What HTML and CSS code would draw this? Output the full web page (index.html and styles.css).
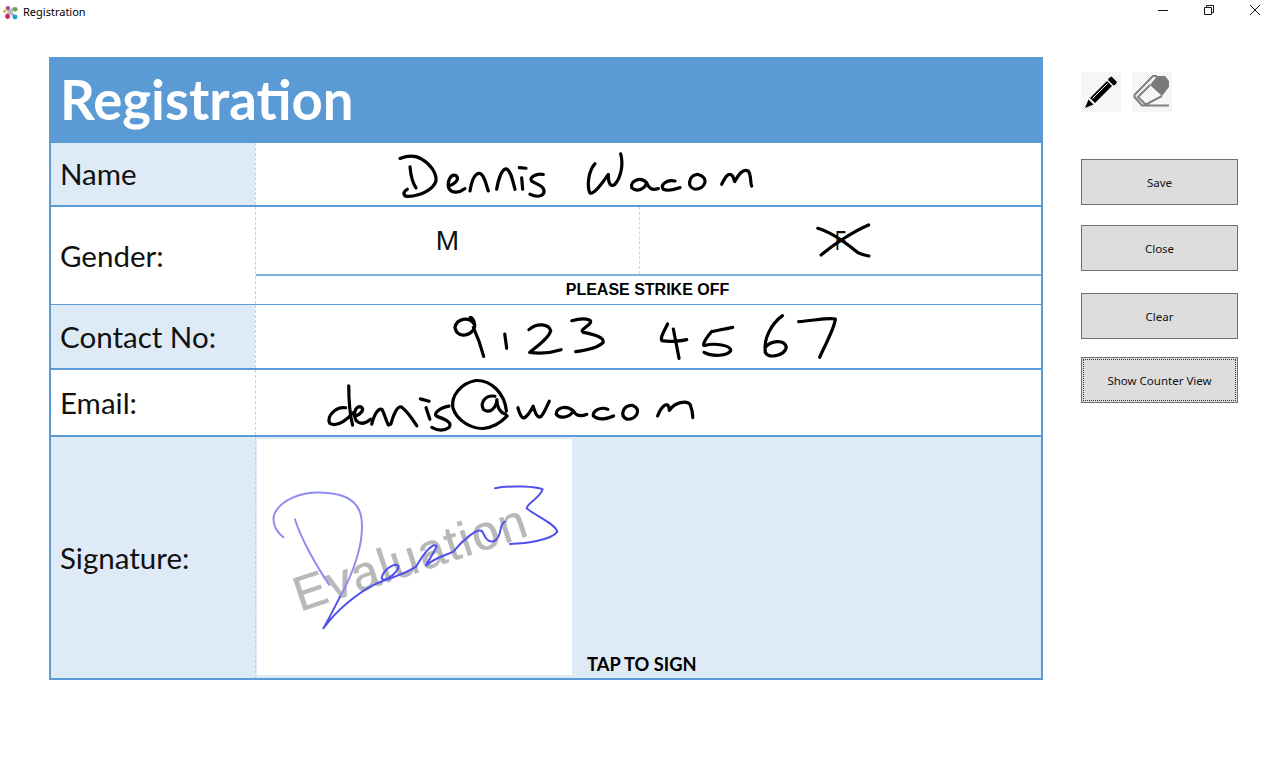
FILE: index.html
```html
<!DOCTYPE html>
<html lang="en">
<head>
<meta charset="utf-8">
<title>Registration</title>
<link rel="stylesheet" href="styles.css">
</head>
<body>
<div class="titlebar">
  <div class="title-left">
    <svg class="app-icon" viewBox="0 0 16 16" width="16" height="16">
      <path d="M8 8 L4 3 M8 8 L12 4 M8 8 L4 12 M8 8 L12 12" stroke="#b5b5b5" stroke-width="3"/>
      <circle cx="8" cy="8" r="2.5" fill="#b8b8b8"/>
      <circle cx="2.6" cy="7.2" r="1.7" fill="#e8b93a"/>
      <circle cx="6" cy="4" r="2.1" fill="#9c4f96"/>
      <circle cx="13.2" cy="5.3" r="2.4" fill="#6aa84f"/>
      <circle cx="5.6" cy="12.5" r="2.4" fill="#d81b72"/>
      <circle cx="13" cy="13" r="2.4" fill="#1ba1d8"/>
    </svg>
    <span class="title-text">Registration</span>
  </div>
  <div class="win-controls">
    <div class="win-btn"><svg viewBox="0 0 10 10" width="10" height="10"><path d="M0 5.5H10" stroke="#111" fill="none"/></svg></div>
    <div class="win-btn"><svg viewBox="0 0 10 10" width="10" height="10"><path d="M.5 2.5H7.5V9.5H.5ZM2.5 2.5V.5H9.5V7.5H7.5" stroke="#111" fill="none"/></svg></div>
    <div class="win-btn"><svg viewBox="0 0 10 10" width="10" height="10"><path d="M0 0L10 10M10 0L0 10" stroke="#111" fill="none"/></svg></div>
  </div>
</div>

<main class="main">
  <section class="form">
    <h1 class="form-title">Registration</h1>

    <div class="row row-name">
      <div class="label tinted">Name</div>
      <div class="value">
        <svg class="ink" viewBox="-372 9 2355 189" preserveAspectRatio="none">
          <path d="M60 56C80 48 105 45 125 58C150 72 170 100 168 125C160 152 120 170 85 172C70 172 66 160 82 150M90 82C92 105 97 130 108 146"/>
          <path d="M205 140C225 135 240 120 228 108C210 102 200 130 207 148C218 165 240 160 255 148"/>
          <path d="M270 155C275 125 285 100 300 102C312 105 318 135 325 155M350 150C355 120 365 90 378 88C392 90 398 125 405 150"/>
          <path d="M425 115L428 150M418 84L438 86"/>
          <path d="M490 105C470 100 445 115 455 125C470 135 495 140 492 160C485 175 465 172 450 165"/>
          <path d="M645 72C625 95 620 140 630 162C645 165 670 125 685 105C685 130 690 145 705 135C725 110 730 70 722 42"/>
          <path d="M800 130C780 110 750 125 755 145C770 160 795 150 800 130C805 145 815 155 835 148"/>
          <path d="M885 125C860 120 840 135 850 150C865 158 885 150 900 145"/>
          <path d="M950 105C925 110 920 145 945 150C975 150 990 115 955 105"/>
          <path d="M1025 135C1035 115 1045 95 1058 110C1065 125 1063 130 1065 125C1075 105 1090 85 1105 95C1115 110 1110 130 1115 140"/>
        </svg>
      </div>
    </div>

    <div class="row row-gender">
      <div class="label">Gender:</div>
      <div class="value gender-value">
        <div class="gender-options">
          <div class="gender-option">M</div>
          <div class="gender-option gender-f">
            <span class="gender-letter">F</span>
            <svg class="ink strike" viewBox="-417 21 1200 201" preserveAspectRatio="none">
              <path d="M115 85C150 95 200 130 225 150C240 165 255 165 268 168"/>
              <path d="M125 165C160 135 220 95 267 75"/>
            </svg>
          </div>
        </div>
        <div class="strike-note">PLEASE STRIKE OFF</div>
      </div>
    </div>

    <div class="row row-contact">
      <div class="label tinted">Contact No:</div>
      <div class="value">
        <svg class="ink" viewBox="15.7 18 2049 189" preserveAspectRatio="none">
          <path d="M585 75C570 50 540 60 535 85C540 115 570 115 585 90C590 70 580 55 575 55M583 85C595 115 605 150 610 172"/>
          <path d="M665 105L670 148"/>
          <path d="M728 92C750 70 780 75 785 95C780 120 745 145 730 160C760 165 790 160 812 152"/>
          <path d="M840 65C870 55 895 60 888 72C880 85 860 92 870 100C895 105 925 115 922 130C905 150 870 155 850 158"/>
          <path d="M1090 75C1080 100 1070 115 1075 125C1100 130 1130 125 1140 122M1105 90C1110 120 1115 150 1120 178"/>
          <path d="M1260 85C1235 90 1220 95 1205 98C1195 110 1180 135 1185 140C1215 130 1255 140 1255 155C1245 170 1210 175 1185 160"/>
          <path d="M1390 50C1360 75 1340 120 1345 160C1355 180 1395 170 1400 145C1395 120 1360 125 1345 145"/>
          <path d="M1432 68C1470 65 1510 55 1528 60C1525 90 1500 140 1487 175"/>
        </svg>
      </div>
    </div>

    <div class="row row-email">
      <div class="label">Email:</div>
      <div class="value">
        <svg class="ink" viewBox="15.7 210 2051 198" preserveAspectRatio="none">
          <path d="M258 258C258 300 262 350 268 378M250 325C225 320 200 350 208 372C225 385 250 365 270 340"/>
          <path d="M275 350C290 345 300 330 290 322C275 320 268 345 278 365C290 378 305 370 315 360"/>
          <path d="M318 375C325 345 335 325 345 330C352 345 355 365 362 378M368 375C375 345 385 320 395 322C410 335 425 360 436 380"/>
          <path d="M460 325L470 360M445 298L468 305"/>
          <path d="M520 320C495 325 475 345 490 352C510 360 530 370 520 385C505 398 490 395 475 385"/>
          <path d="M670 335C665 280 630 240 590 242C550 250 525 290 530 325C540 365 580 390 610 388C640 385 660 365 672 350"/>
          <path d="M640 290C615 285 600 310 610 330C625 345 645 325 645 300C645 325 655 340 668 345"/>
          <path d="M700 325C705 345 710 360 718 355C730 345 735 330 740 320C745 340 750 358 760 352C770 340 775 320 782 305"/>
          <path d="M845 335C825 315 800 325 800 345C810 360 835 355 845 335C850 345 860 355 880 345"/>
          <path d="M935 330C915 320 895 335 897 350C910 365 935 358 950 350"/>
          <path d="M995 318C975 320 965 350 985 360C1010 360 1025 330 1000 318"/>
          <path d="M1065 350C1075 320 1090 305 1095 325C1095 335 1095 335 1098 330C1110 310 1140 300 1150 315C1155 330 1157 345 1157 355"/>
        </svg>
      </div>
    </div>

    <div class="row row-signature">
      <div class="label tinted">Signature:</div>
      <div class="value sign-value">
        <div class="sign-box">
          <svg class="signature" viewBox="21 -93 945 708">
            <text class="watermark" transform="translate(150 425) rotate(-18.4)">Evaluation</text>
            <path class="sig-light" d="M100 202C80 185 65 165 72 135C90 90 150 65 220 68C290 70 330 95 335 150C342 220 310 310 270 380"/>
            <path class="sig-light" d="M135 148C150 200 200 290 238 345"/>
            <path class="sig-dark" d="M270 380C250 420 235 450 220 475C260 420 320 370 380 340C420 325 470 310 498 290"/>
            <path class="sig-dark" d="M395 322C405 290 450 272 445 295C430 320 395 340 395 322"/>
            <path class="sig-dark" d="M498 290C515 262 545 215 560 228C555 245 520 295 530 285C560 260 590 255 610 245C630 220 690 160 700 190C710 215 730 225 745 200C755 180 750 160 765 155"/>
            <path class="sig-dark" d="M735 55C780 45 860 50 878 58C870 85 830 100 830 115C860 140 915 160 922 185C905 210 830 220 780 222"/>
          </svg>
        </div>
        <div class="tap">TAP TO SIGN</div>
      </div>
    </div>
  </section>

  <aside class="side">
    <div class="tools">
      <div class="tool">
        <svg viewBox="0 0 40 40" width="40" height="40">
          <path d="M4 36L7.500 27.500L12.500 32.500Z" fill="#000"/>
          <path d="M9 26L26 9L31 14L14 31Z" fill="#000"/>
          <path d="M11.500 26.500L26.500 11.500" stroke="#fff" stroke-width="1" fill="none"/>
          <path d="M28 6L30.500 4.500L36 10L34.500 12.500L32.500 13.500L27 8Z" fill="#000"/>
        </svg>
      </div>
      <div class="tool">
        <svg viewBox="0 0 40 40" width="40" height="40">
          <path d="M25 4H33L37 9V15L30 24L18 13Z" fill="#7a7a7a"/>
          <path d="M25 4H21L2.500 23V25L10 33.500H37M18 13L6 25L13 32L15 32L30 24" fill="none" stroke="#808080" stroke-width="2"/>
        </svg>
      </div>
    </div>
    <button class="btn btn-save">Save</button>
    <button class="btn btn-close">Close</button>
    <button class="btn btn-clear">Clear</button>
    <button class="btn btn-counter"><span class="focus-ring">Show Counter View</span></button>
  </aside>
</main>
</body>
</html>
```
FILE: styles.css
```css
* { box-sizing: border-box; }
html, body { margin: 0; padding: 0; height: 100%; background: #fff; overflow: hidden; }
body { font-family: "Open Sans", "Liberation Sans", sans-serif; color: #000; }

.titlebar { height: 24px; display: flex; justify-content: space-between; align-items: flex-start; }
.title-left { display: flex; align-items: center; height: 24px; padding-left: 2px; gap: 5px; }
.app-icon { display: block; }
.title-text { font-family: "Noto Sans", sans-serif; font-size: 11px; line-height: 24px; }
.win-controls { display: flex; padding-right: 2px; }
.win-btn { width: 46px; height: 20px; display: flex; align-items: center; justify-content: center; }
.win-btn svg { display: block; }

.main { display: flex; padding: 33px 0 0 49px; }

.form {
  width: 994px; height: 623px; border: 2px solid #5b9bd5;
  display: grid; grid-template-rows: 84px 64px 98px 65px 67px 241px;
}
.form-title {
  margin: 0; background: #5b9bd5; color: #fff; padding-left: 9px;
  font-family: Lato, sans-serif; font-weight: 700; font-size: 54.5px; line-height: 81px;
}
.row { display: grid; grid-template-columns: 204px minmax(0, 1fr); grid-template-rows: minmax(0, 1fr); min-height: 0; }
.row-name, .row-email, .row-contact { border-bottom: 2px solid #5b9bd5; }
.row-gender { border-bottom: 1px solid #5b9bd5; }
.label {
  display: flex; align-items: center; padding-left: 9px; padding-bottom: 1px;
  font-family: Lato, sans-serif; font-size: 29.5px; color: #111;
}
.tinted { background: #deeaf6; }
.value { border-left: 1px dashed #cfcfcf; min-width: 0; min-height: 0; }
.ink { display: block; width: 100%; height: 100%; overflow: visible; }
.ink path { fill: none; stroke: #000; stroke-width: 3.2px; stroke-linecap: round; stroke-linejoin: round; vector-effect: non-scaling-stroke; }

.gender-value { display: flex; flex-direction: column; }
.gender-options { height: 69px; display: grid; grid-template-columns: 383px 1fr; border-bottom: 2px solid #7fb0de; }
.gender-option {
  display: flex; align-items: center; justify-content: center;
  font-family: "Liberation Sans", sans-serif; font-size: 28px; color: #111;
}
.gender-f { border-left: 1px dashed #d5d5d5; position: relative; }
.gender-letter { display: block; transform: scaleX(0.65); }
.strike { position: absolute; left: 0; top: 0; }
.strike-note {
  flex: 1; text-align: center; padding-right: 2px;
  font-family: "Liberation Sans", sans-serif; font-weight: 700; font-size: 16px; line-height: 27px;
}

.sign-value { background: #deeaf6; display: flex; align-items: flex-end; padding: 2px 0 3px 1px; }
.sign-box { width: 315px; height: 236px; background: #fff; flex: none; }
.signature { display: block; width: 100%; height: 100%; }
.watermark { font-family: "Liberation Sans", sans-serif; font-size: 146px; letter-spacing: 5px; fill: #b8b8b8; stroke: #b8b8b8; stroke-width: 1.5; }
.sig-light, .sig-dark { fill: none; stroke-linecap: round; stroke-linejoin: round; }
.sig-light { stroke: #8e8ef2; stroke-width: 6; }
.sig-dark { stroke: #5050ee; stroke-width: 6; }
.tap { font-family: Lato, sans-serif; font-weight: 700; font-size: 18.3px; line-height: 22px; margin-left: 15px; }

.side { margin-left: 38px; width: 157px; padding-top: 15px; display: flex; flex-direction: column; }
.tools { display: flex; gap: 11px; }
.tool {
  width: 40px; height: 40px;
  background: repeating-conic-gradient(#ededed 0 25%, #fff 0 50%) 0 0 / 2px 2px;
}
.tool svg { display: block; }
.btn {
  height: 46px; width: 157px; padding: 0; border: 1px solid #707070; color: #111;
  font-family: "Noto Sans", sans-serif; font-size: 11.5px;
  background:
    linear-gradient(#dddddd 0 55%, transparent 55%),
    repeating-conic-gradient(#d9d9d9 0 25%, #e0e0e0 0 50%) 0 0 / 2px 2px;
  display: flex; align-items: center; justify-content: center;
}
.btn-save { margin-top: 47px; }
.btn-close { margin-top: 20px; }
.btn-clear { margin-top: 22px; }
.btn-counter { margin-top: 18px; padding: 1px; }
.focus-ring { flex: 1; align-self: stretch; border: 1px dotted #333; display: flex; align-items: center; justify-content: center; }
```
